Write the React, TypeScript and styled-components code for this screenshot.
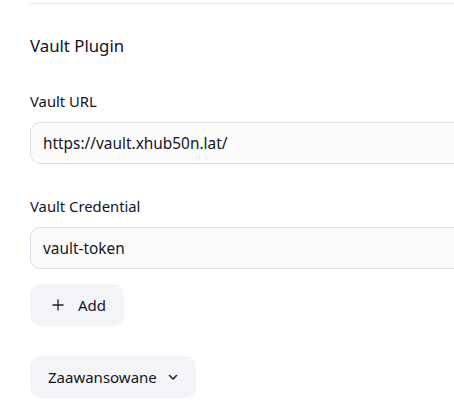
import React from "react";
import styled, { createGlobalStyle } from "styled-components";

const Global = createGlobalStyle`
  html, body { margin: 0; padding: 0; background: #fff; overflow: hidden; }
  body { font-family: "Segoe UI", "Noto Sans", "Open Sans", sans-serif; color: #14141f; }
`;

const Page = styled.div`
  padding: 3px 0 0 30px;
  overflow: hidden;
`;

const Section = styled.section`
  border-top: 1px solid #e6e8ee;
  display: flex;
  flex-direction: column;
  align-items: flex-start;
`;

const Heading = styled.h2`
  margin: 30px 0 0;
  font-size: 16.8px;
  font-weight: 400;
  line-height: 24px;
`;

const Label = styled.label<{ $gap: number }>`
  margin-top: ${(p) => p.$gap}px;
  font-size: 14.8px;
  line-height: 22px;
`;

const Input = styled.div`
  box-sizing: border-box;
  margin-top: 10px;
  width: calc(100% + 30px);
  height: 42px;
  border: 1px solid #d9deea;
  border-radius: 10px;
  background: #fcfcfd;
  padding: 0 12px;
  display: flex;
  align-items: center;
  font-size: 15.4px;
`;

const Button = styled.button<{ $gap: number; $pl: number; $pr: number; $iconGap: number }>`
  margin-top: ${(p) => p.$gap}px;
  height: 42px;
  border: none;
  border-radius: 10px;
  background: #f2f4f7;
  display: flex;
  align-items: center;
  gap: ${(p) => p.$iconGap}px;
  padding: 0 ${(p) => p.$pr}px 0 ${(p) => p.$pl}px;
  font-family: inherit;
  font-size: 15px;
  color: #14141f;
`;

export default function App() {
  return (
    <>
      <Global />
      <Page>
        <Section>
          <Heading>Vault Plugin</Heading>
          <Label $gap={32}>Vault URL</Label>
          <Input>https://vault.xhub50n.lat/</Input>
          <Label $gap={31}>Vault Credential</Label>
          <Input>vault-token</Input>
          <Button $gap={15} $pl={22} $pr={18} $iconGap={14}>
            <svg width="12" height="12" viewBox="0 0 12 12" fill="none" stroke="#222" strokeWidth="1.3">
              <path d="M6 0.5V11.5M0.5 6H11.5" />
            </svg>
            Add
          </Button>
          <Button $gap={30} $pl={18} $pr={18} $iconGap={11}>
            Zaawansowane
            <svg width="10" height="10" viewBox="0 0 10 10" fill="none" stroke="#222" strokeWidth="1.6" strokeLinecap="round" strokeLinejoin="round">
              <path d="M1.5 3.5L5 7L8.5 3.5" />
            </svg>
          </Button>
        </Section>
      </Page>
    </>
  );
}
